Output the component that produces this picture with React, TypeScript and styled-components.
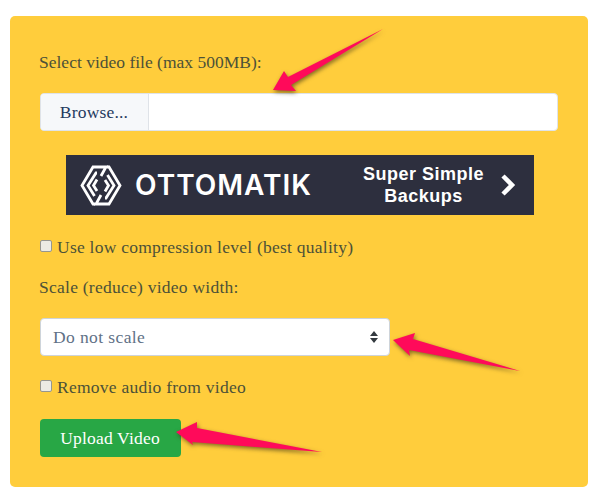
import React from "react";
import styled, { createGlobalStyle } from "styled-components";

const GlobalStyle = createGlobalStyle`
  html, body {
    margin: 0;
    background: #fff;
  }
  body {
    font-family: "Liberation Serif", "DejaVu Serif", serif;
  }
`;

const Page = styled.div`
  position: relative;
  width: 594px;
  height: 493px;
  padding: 16px 6px 6px 10px;
  box-sizing: border-box;
`;

const Panel = styled.form`
  height: 471px;
  box-sizing: border-box;
  padding: 36px 30px 0;
  background: #ffcd3c;
  border-radius: 5px;
  display: flex;
  flex-direction: column;
  align-items: flex-start;
`;

const Label = styled.label<{ $track: number }>`
  margin-left: -1px;
  font-size: 17.5px;
  line-height: 20px;
  letter-spacing: ${(p) => p.$track}px;
  color: #4c5138;
`;

const FileField = styled.div`
  margin-top: 21px;
  width: 518px;
  height: 38px;
  box-sizing: border-box;
  display: flex;
  background: #fff;
  border: 1px solid #dfe3e8;
  border-radius: 4px;
  overflow: hidden;
`;

const Browse = styled.div`
  width: 108px;
  padding-right: 1px;
  box-sizing: border-box;
  display: flex;
  align-items: center;
  justify-content: center;
  background: #f6f8fa;
  border-right: 1px solid #dfe3e8;
  font-size: 17.5px;
  letter-spacing: 0.2px;
  color: #1f3a5f;
`;

const Banner = styled.a`
  margin: 24px 0 0 26px;
  width: 468px;
  height: 60px;
  flex: none;
  display: flex;
  align-items: center;
  background: #2d2f3e;
  color: #fff;
`;

const Logo = styled.svg`
  width: 44px;
  height: 45px;
  margin-left: 13px;
  flex: none;
`;

const Wordmark = styled.span`
  margin-left: 12px;
  width: 228px;
  font-family: Inter, "Liberation Sans", sans-serif;
  font-size: 28px;
  font-weight: 600;
  letter-spacing: 1px;
  line-height: 1;
`;

const Tagline = styled.span`
  width: 121px;
  white-space: nowrap;
  text-align: center;
  font-family: "Liberation Sans", Arial, sans-serif;
  font-size: 18px;
  font-weight: 700;
  line-height: 22px;
  letter-spacing: 0.5px;
`;

const Chevron = styled.svg`
  width: 16px;
  height: 22px;
  margin-left: 16px;
  flex: none;
`;

const CheckRow = styled.label<{ $top: number; $track: number }>`
  margin-top: ${(p) => p.$top}px;
  display: flex;
  align-items: center;
  font-size: 17.5px;
  line-height: 20px;
  letter-spacing: ${(p) => p.$track}px;
  color: #4c5138;
`;

const Box = styled.span`
  width: 12px;
  height: 12px;
  box-sizing: border-box;
  margin-right: 5px;
  position: relative;
  top: -1px;
  background: #ecebe4;
  border: 1px solid #969690;
  border-radius: 2px;
`;

const SpacedLabel = styled(Label)`
  margin-top: 20px;
`;

const SelectField = styled.div`
  margin-top: 21px;
  width: 350px;
  height: 38px;
  box-sizing: border-box;
  padding: 0 12px;
  display: flex;
  align-items: center;
  justify-content: space-between;
  background: #fff;
  border: 1px solid #ced4da;
  border-radius: 4px;
  font-size: 17.5px;
  letter-spacing: 0.4px;
  color: #5f7186;
`;

const Updown = styled.svg`
  width: 8px;
  height: 12px;
  margin-right: -1px;
`;

const Submit = styled.button`
  margin-top: 22px;
  width: 141px;
  height: 38px;
  padding: 0 1px 0 0;
  border: 0;
  border-radius: 4px;
  background: #28a745;
  color: #fff;
  font-family: inherit;
  font-size: 17.5px;
  letter-spacing: 0.2px;
`;

const ArrowLayer = styled.svg`
  position: absolute;
  inset: 0;
  width: 594px;
  height: 493px;
  pointer-events: none;
  filter: drop-shadow(1px 2px 2px rgba(60, 50, 20, 0.65));
`;

const arrows = [
  "383,29 288,77 284,71 273,90 296,91 291,85",
  "520,371 413,339 415,333 393,340 410,356 409,350",
  "322,452 197,428 197,422 176,432 193,445 192,442",
];

const logoHalf = (
  <>
    <path d="M22 13 L27 4 H14 L3 22.5 L14 41 H16" />
    <path d="M18 10 H17 L9 22.5 L15.5 33" />
    <path d="M18 16.5 L14.5 22.5 L18 28" />
  </>
);

export default function App() {
  return (
    <Page>
      <GlobalStyle />
      <Panel>
        <Label $track={0}>Select video file (max 500MB):</Label>
        <FileField>
          <Browse>Browse...</Browse>
        </FileField>
        <Banner>
          <Logo viewBox="0 0 44 45">
            <g fill="none" stroke="#fff" strokeWidth="2.8">
              {logoHalf}
              <g transform="rotate(180 22 22.5)">{logoHalf}</g>
            </g>
          </Logo>
          <Wordmark>OTTOMATIK</Wordmark>
          <Tagline>
            Super Simple
            <br />
            Backups
          </Tagline>
          <Chevron viewBox="0 0 16 22">
            <path d="M3 2l9 9-9 9" fill="none" stroke="#fff" strokeWidth="4.5" />
          </Chevron>
        </Banner>
        <CheckRow $top={22} $track={0.25}>
          <Box />
          Use low compression level (best quality)
        </CheckRow>
        <SpacedLabel $track={0.25}>Scale (reduce) video width:</SpacedLabel>
        <SelectField>
          Do not scale
          <Updown viewBox="0 0 8 12">
            <path d="M4 0l4 5H0zM4 12L0 7h8z" fill="#343a40" />
          </Updown>
        </SelectField>
        <CheckRow $top={21} $track={0.25}>
          <Box />
          Remove audio from video
        </CheckRow>
        <Submit type="button">Upload Video</Submit>
      </Panel>
      <ArrowLayer viewBox="0 0 594 493">
        {arrows.map((points) => (
          <polygon key={points} points={points} fill="#ff0a5a" />
        ))}
      </ArrowLayer>
    </Page>
  );
}
